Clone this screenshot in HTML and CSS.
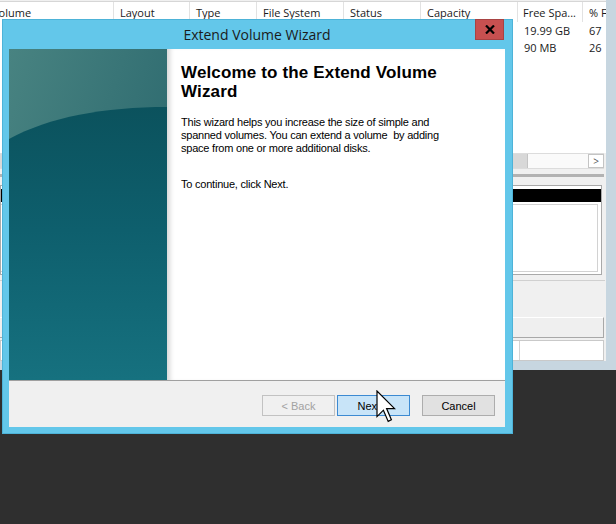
FILE: index.html
```html
<!DOCTYPE html>
<html>
<head>
<meta charset="utf-8">
<link rel="stylesheet" href="styles.css">
</head>
<body>
<div class="app">
  <div class="app-main">
    <div class="head">
      <div class="hc c1">Volume</div>
      <div class="hc c2">Layout</div>
      <div class="hc c3">Type</div>
      <div class="hc c4">File System</div>
      <div class="hc c5">Status</div>
      <div class="hc c6">Capacity</div>
      <div class="hc c7">Free Spa...</div>
      <div class="hc c8">% F</div>
    </div>
    <div class="list">
      <div class="row">
        <div class="rc c1"></div><div class="rc c2"></div><div class="rc c3"></div><div class="rc c4"></div>
        <div class="rc c5"></div><div class="rc c6"></div><div class="rc c7">19.99 GB</div><div class="rc c8">67</div>
      </div>
      <div class="row">
        <div class="rc c1"></div><div class="rc c2"></div><div class="rc c3"></div><div class="rc c4"></div>
        <div class="rc c5"></div><div class="rc c6"></div><div class="rc c7">90 MB</div><div class="rc c8">26</div>
      </div>
    </div>
    <div class="hscroll">
      <div class="thumb"></div>
      <div class="track"></div>
      <div class="sbtn">&gt;</div>
    </div>
    <div class="pane-edge"></div>
    <div class="disk">
      <div class="disk-bar"></div>
      <div class="disk-body"></div>
    </div>
    <div class="legend"></div>
    <div class="box-gray"></div>
    <div class="box-white"><div class="box-cell"></div></div>
  </div>
</div>

<div class="wiz">
  <div class="titlebar">
    <span class="title">Extend Volume Wizard</span>
    <div class="close">
      <svg width="10" height="9" viewBox="0 0 10 9"><path d="M1 0.5 L9 8.5 M9 0.5 L1 8.5" stroke="#000" stroke-width="2.2" fill="none"/></svg>
    </div>
  </div>
  <div class="wiz-body">
    <div class="wiz-top">
      <div class="banner">
        <svg width="158" height="331" viewBox="0 0 158 331">
          <defs>
            <linearGradient id="gt" x1="0" y1="0" x2="1" y2="0.7">
              <stop offset="0" stop-color="#488381"/>
              <stop offset="1" stop-color="#2a676d"/>
            </linearGradient>
            <linearGradient id="gb" x1="0" y1="0" x2="0" y2="1">
              <stop offset="0" stop-color="#0b525d"/>
              <stop offset="0.45" stop-color="#0e5f6d"/>
              <stop offset="1" stop-color="#16717f"/>
            </linearGradient>
          </defs>
          <rect width="158" height="331" fill="url(#gt)"/>
          <path d="M0 90 C40 68 95 58 158 58 L158 331 L0 331 Z" fill="url(#gb)"/>
        </svg>
      </div>
      <div class="content">
        <h1 class="heading">Welcome to the Extend Volume Wizard</h1>
        <p class="text">This wizard helps you increase the size of simple and spanned volumes. You can extend a volume&nbsp; by adding space from one or more additional disks.</p>
        <p class="text cont">To continue, click Next.</p>
      </div>
    </div>
    <div class="wiz-foot">
      <button class="btn btn-back" disabled>&lt; Back</button>
      <button class="btn btn-next">Next &gt;</button>
      <button class="btn btn-cancel">Cancel</button>
    </div>
  </div>
</div>

<svg class="cursor" width="20" height="33" viewBox="0 0 20 33">
  <path d="M1 1 L1 26.6 L7.4 20.2 L12.2 31.4 L15.4 29.8 L10.6 18.6 L18.6 18.6 Z" fill="#fff" stroke="#000" stroke-width="1.2" stroke-linejoin="miter"/>
</svg>
</body>
</html>
```
FILE: styles.css
```css
* { box-sizing: border-box; }
html, body { margin: 0; padding: 0; }
body {
  background: #2f2f2f;
  width: 616px;
  height: 524px;
  overflow: hidden;
  position: relative;
  font-family: "Liberation Sans", Arial, sans-serif;
}

/* Background application window */
.app {
  position: absolute;
  left: 0;
  top: 0;
  width: 616px;
  height: 370px;
  background: #c7d6e0;
  padding: 0 10px 9px 0;
}
.app-main {
  height: 361px;
  background: #f0f0f0;
  display: flex;
  flex-direction: column;
  overflow: hidden;
  font-family: "Open Sans", sans-serif;
  font-size: 11px;
  color: #1a1a1a;
}
.head {
  margin-top: 1px;
  border-top: 1px solid #d6d6d6;
  height: 21px;
  display: flex;
  margin-left: -14px;
  background: #fff;
  flex: none;
}
.hc {
  border-right: 1px solid #e2e2e2;
  padding-left: 6px;
  line-height: 22px;
  white-space: nowrap;
  overflow: hidden;
  flex: none;
}
.c1 { width: 128px; }
.c2 { width: 76px; }
.c3 { width: 67px; }
.c4 { width: 87px; }
.c5 { width: 77px; }
.c6 { width: 97px; }
.c7 { width: 65px; padding-left: 5px; }
.c8 { width: 40px; }
.list {
  height: 131px;
  background: #fff;
  margin-left: -14px;
  flex: none;
}
.row { display: flex; height: 17px; }
.rc { line-height: 17px; white-space: nowrap; overflow: hidden; flex: none; padding-left: 6px; }
.hscroll {
  height: 16px;
  display: flex;
  flex: none;
  background: #fafafa;
  border-top: 1px solid #dcdcdc;
  border-bottom: 1px solid #dcdcdc;
  margin-right: 2px;
}
.thumb { width: 528px; background: #d8d8d8; border-right: 1px solid #c4c4c4; }
.track { flex: 1; }
.sbtn {
  width: 16px;
  border: 1px solid #c4c4c4;
  background: #fff;
  font-size: 10px;
  line-height: 12px;
  text-align: center;
  color: #555;
}
.pane-edge {
  height: 8px;
  flex: none;
  margin-right: 2px;
  border-bottom: 3px solid #b2b2b2;
}
.disk {
  margin-top: 8px;
  height: 90px;
  flex: none;
  margin-right: 4px;
  border: 1px solid #a9a9a9;
  background: #fff;
  display: flex;
  flex-direction: column;
  padding-top: 3px;
}
.disk-bar { height: 13px; background: #000; flex: none; }
.disk-body {
  flex: 1;
  margin: 2px 3px 2px 0;
  border: 1px solid #d2d2d2;
  border-left: none;
  background: #fff;
}
.legend {
  margin-top: 5px;
  height: 37px;
  flex: none;
  border-top: 1px solid #d0d0d0;
  margin-right: 1px;
}
.box-gray {
  height: 21px;
  flex: none;
  margin-right: 2px;
  background: #efefef;
  border-top: 1px solid #fff;
  border-right: 1px solid #a8a8a8;
  border-bottom: 1px solid #a8a8a8;
}
.box-white {
  margin-top: 2px;
  height: 21px;
  flex: none;
  margin-right: 2px;
  background: #fff;
  border: 1px solid #c9c9c9;
  display: flex;
}
.box-cell { width: 519px; border-right: 1px solid #d4d4d4; }

/* Wizard window */
.wiz {
  position: absolute;
  left: 2px;
  top: 19px;
  width: 511px;
  height: 415px;
  background: #63c7ea;
  border: 1px solid #4db3d8;
  display: flex;
  flex-direction: column;
  padding: 0 7px 6px 6px;
}
.titlebar {
  height: 29px;
  flex: none;
  text-align: center;
}
.title {
  font-family: "Open Sans", sans-serif;
  font-size: 14px;
  line-height: 29px;
  color: #1b1b1b;
}
.close {
  position: absolute;
  top: -1px;
  right: 8px;
  width: 29px;
  height: 21px;
  background: #c75050;
  border: 1px solid #a84343;
  display: flex;
  align-items: center;
  justify-content: center;
}
.close svg { display: block; }
.wiz-body {
  flex: 1;
  display: flex;
  flex-direction: column;
}
.wiz-top {
  height: 332px;
  flex: none;
  display: flex;
  border-bottom: 1px solid #a0a0a0;
}
.banner { width: 158px; flex: none; height: 331px; }
.banner svg { display: block; }
.content {
  flex: 1;
  background: #fff;
  padding: 14px 54px 0 14px;
  box-shadow: inset 6px 0 5px -3px rgba(0, 0, 0, 0.16);
}
.heading {
  margin: 0 0 15px;
  font-size: 17px;
  line-height: 19px;
  font-weight: bold;
  letter-spacing: 0.15px;
  color: #000;
}
.text {
  margin: 0;
  font-size: 11px;
  line-height: 13px;
  letter-spacing: -0.22px;
  color: #000;
}
.text.cont { margin-top: 23px; }
.wiz-foot {
  flex: 1;
  background: #f0f0f0;
  display: flex;
  justify-content: flex-end;
  align-items: flex-start;
  padding: 14px 10px 0 0;
}
.btn {
  width: 73px;
  height: 21px;
  font-family: "Liberation Sans", Arial, sans-serif;
  font-size: 11px;
  padding: 0;
  color: #000;
  border: 1px solid #adadad;
  background: #e1e1e1;
}
.btn-back {
  margin-right: 2px;
  color: #a2a2a2;
  border-color: #c2c2c2;
  background: #f0f0f0;
}
.btn-next {
  margin-right: 12px;
  background: #c8e4f8;
  border-color: #3c8ad2;
}

.cursor {
  position: absolute;
  left: 376px;
  top: 390px;
}
```
